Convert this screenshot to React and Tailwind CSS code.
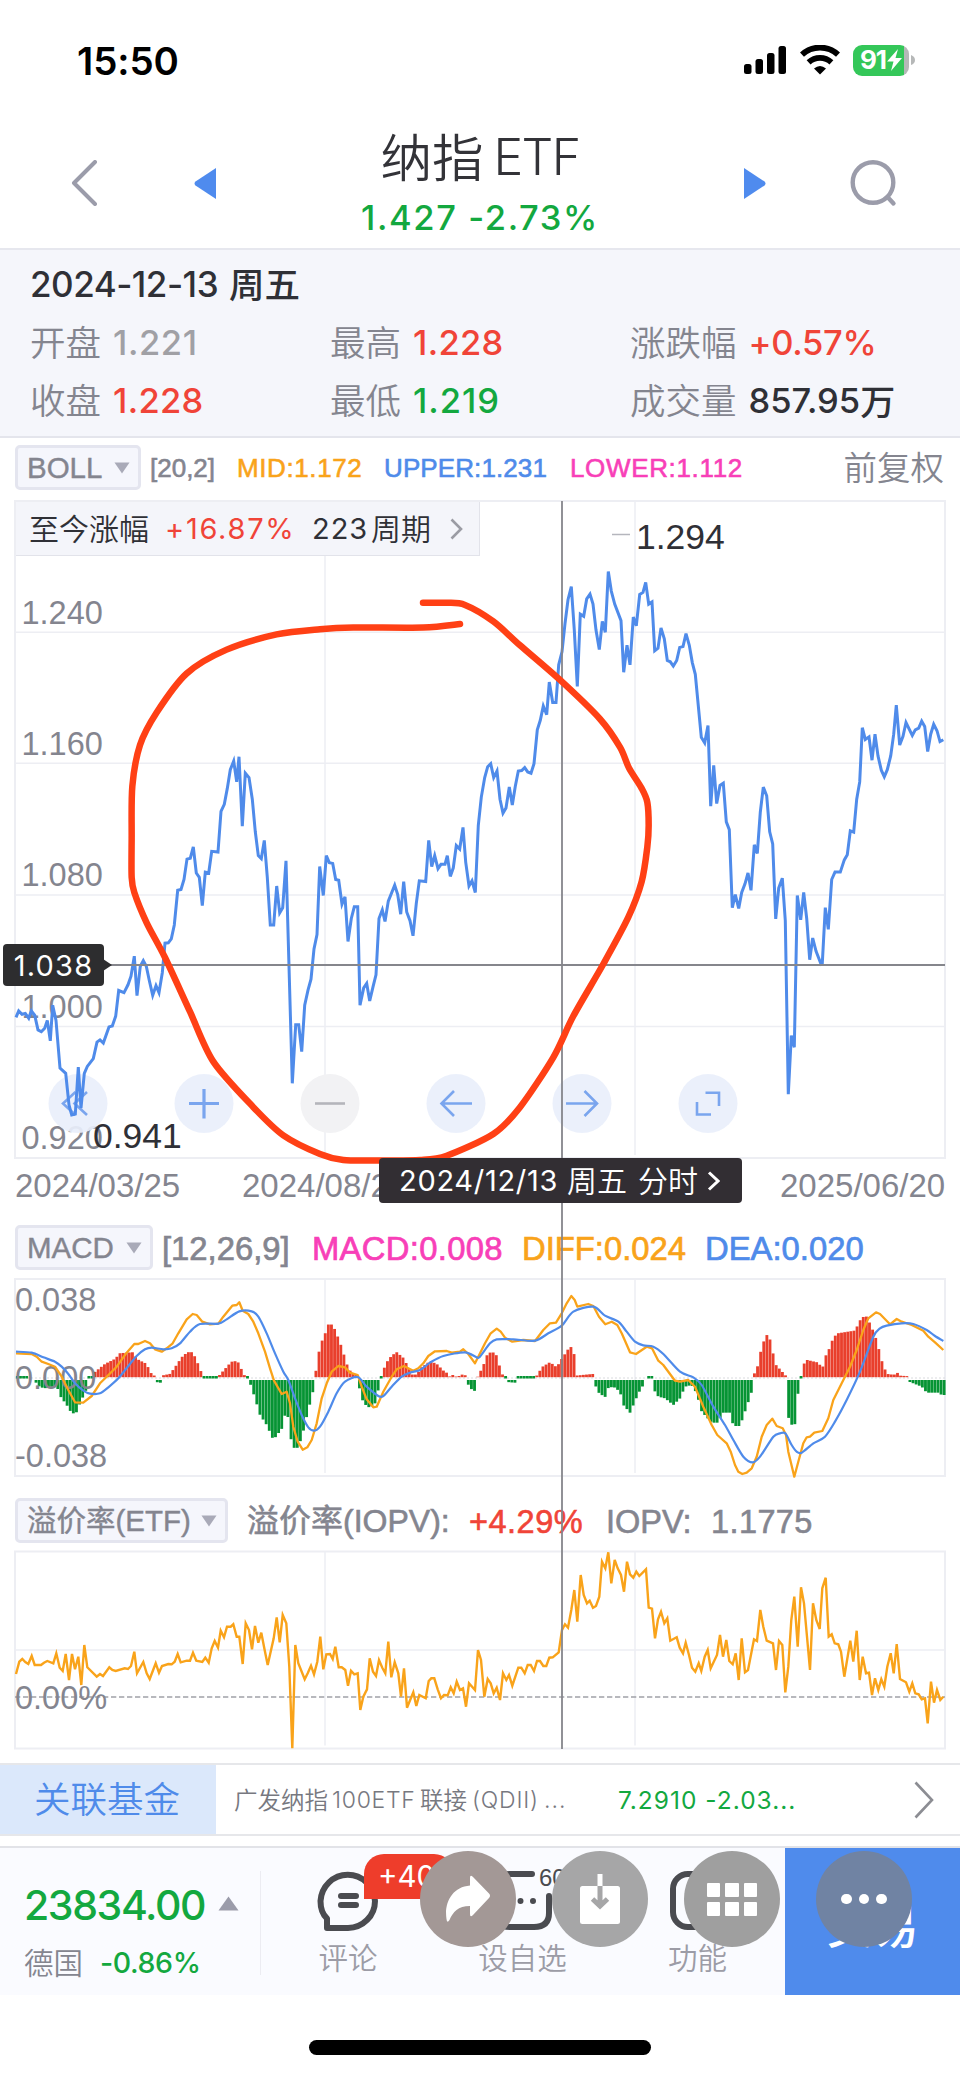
import React from "react";

const SANS = "font-['Liberation_Sans','Noto_Sans_CJK_SC',sans-serif]";

/* Series are stored in third-of-a-pixel units along x, split where long. */
const PRICE_A =
  "48,1193 56,1178 66,1186 76,1184 86,1195 94,1178 104,1188 114,1222 124,1226 134,1218 142,1200 151,1247 158,1165 168,1200 180,1310 197,1322 207,1395 215,1418 226,1416 235,1308 243,1402 253,1322 262,1306 280,1288 291,1250 300,1245 310,1252 327,1215 337,1213 347,1190 356,1131 372,1136 384,1118 393,1098 403,1052 411,1143 421,1075 430,1062 439,1075 448,1108 458,1142 468,1120 477,1136 487,1090 495,1022 505,1021 514,1012 523,980 533,900 543,898 552,875 561,828 571,826 580,800 589,860 598,870 607,935 616,858 626,860 635,810 654,812 663,718 673,702 682,665 691,622 701,602 710,650 717,592 727,752 736,630 747,640 757,690 766,765 775,820 784,827 793,785 802,870 811,980 821,980 830,890 839,952 848,940 858,832 867,1075 877,1345 887,1210 896,1210 905,1272 914,1165 924,1130 933,1105 942,1035 951,1002 959,845";
const PRICE_B =
  "10,912 19,820 28,836 38,838 47,875 56,877 66,932 75,915 84,1018 94,965 103,938 113,938 120,1165 131,1125 140,1115 149,1155 160,1120 168,1095 177,965 187,945 195,972 205,925 224,888 233,910 242,955 251,880 260,950 270,970 279,1005 289,930 298,878 317,880 326,785 335,845 344,820 354,850 363,840 375,840 382,820 391,868 400,848 409,797 419,805 429,755 437,835 447,890 456,878 466,905 475,750 484,685 494,640 503,615 512,608 521,640 531,625 540,690 549,722 558,710 568,662 577,703 586,660 595,625 605,624 614,617 623,627 633,630 642,608 652,530 661,508 670,475 680,495 688,420 698,467 708,467 716,380 726,350 735,285 744,230 754,200 763,300 772,430 781,263 791,268 800,228 810,217 819,240 828,300 838,345 847,280 856,305 865,165 874,210 884,240 903,278 911,397 921,335 930,380 940,270 949,290 959,218";
const PRICE_C =
  "9,213 17,190 26,240 36,235 44,348 54,342 63,295 73,320 82,370 91,373 100,383 110,370 119,340 129,338 138,308 148,335 157,375 166,402 184,547 194,560 204,520 212,706 221,612 230,700 240,658 250,653 259,742 268,760 277,940 286,910 296,942 305,905 315,885 324,860 333,900 343,795 352,815 361,720 370,662 380,682 389,765 398,793 407,966 416,895 427,872 436,970 445,1370 454,1235 463,1262 472,912 482,968 491,905 500,965 509,1060 518,1010 528,1040 543,1070 547,1068 556,940 565,990 575,875 585,858 601,858 613,830 622,818 631,763 641,766 650,690 659,650 667,525 676,552 687,546 696,600 705,540 714,590 724,623 733,638 742,622 752,590 761,540 769,473 779,565 789,545 798,513 817,543 826,530 836,526 845,510 854,522 863,580 872,540 881,517 891,532 900,557 910,553";

const DIFF_A =
  "48,610 95,612 110,620 125,635 145,642 165,650 185,680 205,720 225,757 250,758 275,738 300,700 320,680 350,650 380,608 403,582 415,582 435,573 450,580 465,598 485,605 500,595 518,580 535,550 560,508 578,492 590,495 607,515 630,523 655,521 670,500 697,467 710,465 718,457 728,482 745,492 760,515 775,550 795,605 810,655 822,692 845,732 860,725 870,760 880,830 893,875 908,899 922,892 935,870 950,820 965,745 980,700 995,665 1015,648 1035,652 1050,668 1073,675 1085,710 1100,748 1120,772 1130,770 1150,725 1175,680 1190,658 1212,648 1225,655 1240,662 1255,655 1270,640 1285,618 1305,604 1340,603 1355,608 1380,605 1390,598 1405,612 1425,640 1438,614";
const DIFF_B =
  "15,580 32,550 50,536 62,545 75,563 97,575 130,570 165,573 190,540 210,520 228,518 245,490 260,460 274,438 284,450 292,470 325,462 340,468 357,500 376,523 395,515 412,525 425,550 450,607 468,612 500,590 516,595 535,632 550,645 585,692 600,695 625,690 645,710 670,770 695,825 712,855 740,880 752,905 765,945 775,965 787,972 800,968 815,955 830,920 845,860 860,825 877,806 890,828 908,835 918,855 925,905 943,980 955,935 970,880 980,862 990,860 1003,848 1027,843 1045,805 1060,750 1085,700 1110,650 1130,600 1150,540 1165,505 1188,487 1200,492 1230,523 1250,507 1265,515 1295,525 1330,542 1345,560 1365,577 1390,600";
const DEA_A =
  "48,605 95,608 130,622 165,635 185,650 205,672 225,700 250,722 270,731 300,730 325,712 355,685 385,648 410,618 435,598 455,593 490,598 515,595 540,580 570,545 600,522 655,521 680,508 718,484 755,484 775,500 800,550 825,610 850,665 865,690 885,745 905,795 925,832 943,842 960,830 985,785 1010,730 1035,695 1073,681 1100,710 1135,738 1150,738 1175,710 1205,680 1230,668 1260,660 1290,638 1330,618 1395,607 1430,622";
const DEA_B =
  "0,620 30,580 50,568 100,568 165,572 205,550 245,527 280,485 340,470 375,497 415,515 440,545 465,575 490,586 520,590 550,612 600,665 640,682 665,705 700,770 735,825 760,870 790,920 818,937 840,920 880,860 900,850 916,850 935,885 950,905 965,908 1000,880 1035,860 1065,815 1100,750 1140,665 1180,560 1200,535 1220,527 1265,520 1300,522 1340,540 1365,558 1390,573";

/* Histogram envelope: x, signed height. */
const HIST_A =
  "48,-3 80,-3 82,0 100,0 108,-8 120,-22 140,-25 150,-20 172,-22 178,-45 200,-75 215,-100 228,-100 240,-70 262,-22 266,-4 276,-4 278,10 290,20 315,40 345,55 360,72 400,75 410,55 440,40 450,15 465,3 466,-3 474,-8 490,-8 491,6 510,10 525,30 545,60 562,75 578,75 590,50 605,12 611,5 612,-4 655,-4 657,5 675,25 690,42 700,50 720,42 727,10 735,5 736,-4 748,-4 752,-15 765,-55 780,-105 800,-135 820,-180 835,-160 850,-140 856,-95 868,-120 875,-200 890,-207 905,-175 920,-110 940,-30 945,-5 947,15 960,95 975,130 985,158 998,158 1010,130 1025,90 1040,40 1050,20 1060,10 1075,8 1077,-20 1090,-70 1110,-84 1125,-70 1137,-20 1143,-5 1145,10 1160,45 1175,65 1190,75 1210,58 1225,30 1235,8 1250,8 1265,30 1290,48 1310,40 1330,20 1345,10 1350,0 1360,8 1370,0 1385,8 1400,5 1402,-8 1410,-25 1428,-35 1432,0 1439,12";
const HIST_B =
  "0,15 10,35 20,65 35,78 50,65 65,10 75,3 76,-5 90,-7 105,-8 112,-4 165,-4 172,5 185,30 210,45 230,30 245,55 265,85 275,92 285,60 290,5 310,7 342,10 344,-8 352,-35 375,-52 382,-25 400,-20 420,-35 430,-75 450,-98 460,-75 475,-40 490,-15 495,0 500,0 502,-4 518,-4 522,-30 535,-50 555,-55 580,-75 600,-55 615,-20 635,-15 650,-40 665,-95 695,-128 712,-128 730,-98 750,-98 760,-138 780,-138 800,-80 815,-35 818,5 830,20 840,70 858,130 872,110 885,40 905,18 917,5 919,-95 930,-125 943,-148 952,-55 958,-10 962,-5 965,30 980,52 1010,45 1028,30 1035,60 1050,90 1060,120 1075,132 1125,140 1145,180 1160,182 1175,150 1190,110 1205,50 1220,10 1235,8 1245,8 1250,20 1255,5 1285,3 1287,-5 1300,-10 1325,-20 1340,-38 1375,-38 1385,-45 1395,-45";

const PREM_A =
  "48,582 58,545 67,537 76,546 85,552 95,528 104,555 123,555 132,548 142,543 160,550 169,520 179,563 188,573 197,522 207,600 216,522 225,568 235,530 244,615 253,495 262,562 290,590 300,582 309,588 328,562 337,570 347,573 374,565 384,567 393,558 403,515 411,580 430,546 440,580 449,597 467,550 477,578 486,558 505,552 515,553 524,545 533,522 542,547 560,542 570,542 579,518 589,542 607,546 616,533 626,548 635,505 644,483 654,503 662,452 672,472 681,440 692,440 700,433 710,470 718,470 728,552 737,430 747,450 756,508 765,438 775,488 784,458 793,505 803,555 821,475 830,412 839,487 848,405 859,430 868,560 877,805 886,495 895,550 914,598 923,580 933,557 942,583 952,545 961,470 970,568 979,523 990,522 998,537 1006,500 1016,562 1025,562 1036,570 1044,617 1053,572 1063,583 1073,580 1081,690 1090,650 1101,628 1109,535 1119,575 1128,588 1137,540 1147,563 1156,580 1165,485 1174,592 1184,547 1195,580 1203,650 1212,565 1221,683 1240,637 1249,678 1258,645 1277,655 1286,603 1294,595 1303,595 1313,628 1323,655 1332,645 1343,646 1352,622 1361,640 1370,605 1380,630 1389,625 1398,680 1407,610 1425,630 1434,510";
const PREM_B =
  "3,540 13,650 23,597 32,610 41,640 50,623 60,660 69,580 79,600 87,585 97,617 115,563 124,563 134,580 143,555 152,555 162,573 171,543 180,543 190,558 199,558 208,533 218,532 236,517 246,450 255,433 264,443 274,390 283,330 292,425 302,285 311,345 321,370 329,362 339,383 348,378 358,350 366,245 376,265 385,217 394,310 404,240 413,265 423,285 432,335 441,245 450,283 460,293 469,275 478,288 498,268 506,383 516,386 525,475 534,418 543,395 553,430 562,415 571,482 590,472 599,503 609,520 617,488 627,525 636,563 646,575 656,550 664,573 674,530 683,510 692,565 711,525 720,465 729,530 739,480 748,543 758,553 767,520 776,600 785,475 795,577 804,570 822,478 831,483 841,390 850,440 860,482 879,490 888,570 897,483 907,495 916,637 925,560 934,420 943,350 953,500 963,322 972,370 990,570 999,370 1009,420 1019,447 1027,325 1037,293 1046,470 1055,463 1064,490 1075,493 1083,515 1093,590 1111,482 1120,545 1130,452 1139,600 1148,530 1158,580 1167,578 1176,645 1185,595 1195,630 1204,598 1213,620 1222,560 1232,520 1241,580 1250,492 1260,597 1278,607 1288,635 1297,610 1306,640 1316,643 1325,658 1335,655 1343,730 1353,605 1362,668 1371,630 1381,660 1390,650";

const parse = (s, dx = 0) => s.split(" ").map((p) => p.split(",").map(Number)).map(([x, y]) => [x + dx, y]);
const PRICE_K = 680 / 1568;
const priceXY = ([x, y]) => [x / 3, 500 + y * PRICE_K];
const pts = (list) => list.map(([x, y]) => `${x.toFixed(1)},${y.toFixed(1)}`).join(" ");

const price = [...parse(PRICE_A), ...parse(PRICE_B, 960), ...parse(PRICE_C, 1920)].map(priceXY);
const lower = (a, b, top) => [...parse(a), ...parse(b, 1440)].map(([x, y]) => [x / 3, top + y / 3]);
const diff = lower(DIFF_A, DIFF_B, 1150);
const dea = lower(DEA_A, DEA_B, 1150);
const premium = lower(PREM_A, PREM_B, 1480);

const envelope = [...parse(HIST_A), ...parse(HIST_B, 1440)];
const bars = Array.from({ length: 299 }, (_, i) => {
  const x = 52 + i * 9.33;
  let k = envelope.findIndex((p) => p[0] > x);
  if (k < 1) k = envelope.length - 1;
  const [x0, y0] = envelope[k - 1];
  const [x1, y1] = envelope[k];
  const t = Math.min(1, (x - x0) / (x1 - x0));
  const v = y0 * y1 < 0 ? (t < 0.5 ? y0 : y1) : y0 + (y1 - y0) * t;
  return [x / 3, v / 3];
});

const LOOP = [
  ...parse("420,286 310,294 100,294 0,298", 960),
  ...parse("830,310 680,345 560,400 470,490 420,565 397,660 395,780 395,870 403,905 440,975 495,1055 570,1180 640,1295 760,1400 850,1465"),
  ...parse("0,1508 70,1522 180,1523 300,1522 380,1512 520,1462 600,1400 700,1285 760,1190 850,1070 925,962", 960),
  ...parse("5,880 22,800 26,750 22,697 5,665", 1920),
  ...parse("927,618 900,570 840,505 720,415 600,335 520,280 435,242 380,237 309,237", 960),
].map(priceXY);

const smooth = (p) => {
  let d = `M${p[0][0]} ${p[0][1]}`;
  for (let i = 0; i < p.length - 1; i++) {
    const a = p[i - 1] || p[i];
    const b = p[i];
    const c = p[i + 1];
    const e = p[i + 2] || c;
    d += `C${b[0] + (c[0] - a[0]) / 7} ${b[1] + (c[1] - a[1]) / 7} ${c[0] - (e[0] - b[0]) / 7} ${c[1] - (e[1] - b[1]) / 7} ${c[0]} ${c[1]}`;
  }
  return d;
};

function StatusBar() {
  return (
    <div className="flex h-[120px] shrink-0 items-center justify-between pl-[77px] pr-[45px]">
      <span className="mt-[2px] font-['Inter',sans-serif] text-[38.5px] font-semibold leading-none tracking-[-0.1px] text-black">15:50</span>
      <div className="flex items-center">
        <svg width="42" height="30" viewBox="0 0 42 30">
          <rect x="0" y="19" width="7.5" height="10" rx="2.5" />
          <rect x="11.5" y="14" width="7.5" height="15" rx="2.5" />
          <rect x="23" y="8" width="7.5" height="21" rx="2.5" />
          <rect x="34.5" y="1" width="7.5" height="28" rx="2.5" />
        </svg>
        <svg className="ml-[14px]" width="40" height="30" viewBox="0 0 40 30" fill="none" stroke="#000" strokeWidth="5.8">
          <path d="M2 9.6A26.5 26.5 0 0 1 38 9.6" />
          <path d="M8.6 17.3A17 17 0 0 1 31.4 17.3" />
          <path d="M14 23.4Q20 18.4 26 23.4L20 29.4Z" fill="#000" stroke="none" />
        </svg>
        <div className="ml-[13px] flex h-[31px] w-[56px] items-center overflow-hidden rounded-[9px] bg-[linear-gradient(90deg,#34c759_91%,#b6b8b8_91%)]">
          <span className="ml-[7px] font-['Inter',sans-serif] text-[26px] font-bold leading-none tracking-[-1.2px] text-white">91</span>
          <svg className="ml-px" width="15" height="22" viewBox="0 0 15 22">
            <path d="M11 0L0 12.5H6.5L4 22L15 9H8.5Z" fill="#fff" />
          </svg>
        </div>
        <svg className="ml-[2px]" width="4" height="10" viewBox="0 0 4 10">
          <path d="M0 0Q4 1.5 4 5T0 10Z" fill="#b6b8b8" />
        </svg>
      </div>
    </div>
  );
}

function Header() {
  return (
    <header className="flex h-[130px] shrink-0 justify-between border-b-2 border-[#e6e7ee] pl-[71px] pr-[62px]">
      <div className="flex pt-[40px]">
        <svg width="27" height="46" viewBox="0 0 27 46" fill="none" stroke="#9b9caa" strokeWidth="4" strokeLinecap="round" strokeLinejoin="round">
          <path d="M24 2L3 23L24 44" />
        </svg>
        <svg className="ml-[95px] mt-[7px]" width="24" height="33" viewBox="0 0 24 33">
          <path d="M23 1V32L2.5 18.5Q.5 16.500 2.500 14.500Z" fill="#4f8bee" />
        </svg>
      </div>
      <div className="flex flex-col items-center">
        <div className="mt-[12px] flex h-[50px] items-center gap-[10px] leading-none text-[#333338]">
          <span className="-mt-[4px] font-['Noto_Sans_CJK_SC',sans-serif] text-[51.5px] font-[350]">纳指</span>
          <span className="font-['Inter',sans-serif] text-[50px] font-[350] tracking-[-1.6px]">ETF</span>
        </div>
        <span className="mt-[18px] font-['Inter',sans-serif] text-[34.5px] font-medium leading-[36px] tracking-[1.6px] text-[#13a83f]">1.427 -2.73%</span>
      </div>
      <div className="flex pt-[40px]">
        <svg className="mt-[7px]" width="24" height="33" viewBox="0 0 24 33">
          <path d="M1 1V32L21.500 18.500Q23.500 16.500 21.500 14.500Z" fill="#4f8bee" />
        </svg>
        <svg className="ml-[82px]" width="49" height="48" viewBox="0 0 49 48" fill="none" stroke="#9b9caa" strokeWidth="4.400" strokeLinecap="round">
          <circle cx="24" cy="22.500" r="20.300" />
          <path d="M38.500 37L44.500 43.500" />
        </svg>
      </div>
    </header>
  );
}

function Stat({ label, value, unit, cls }) {
  return (
    <div className="flex items-center gap-[12px] leading-none">
      <span className="-mt-[4px] font-['Noto_Sans_CJK_SC',sans-serif] text-[35.5px] font-[350] text-[#84858f]">{label}</span>
      <span className={`flex items-center font-['Inter',sans-serif] text-[34.5px] font-medium ${cls}`}>
        {value}
        {unit && <span className="-mt-[3px] font-['Noto_Sans_CJK_SC',sans-serif] text-[35px]">{unit}</span>}
      </span>
    </div>
  );
}

function Quote() {
  return (
    <section className="flex h-[188px] shrink-0 flex-col border-b-2 border-[#e4e5ec] bg-[#f5f6fb] pl-[30px]">
      <div className="mt-[14px] flex h-[40px] items-center gap-[11px] leading-none text-[#2f3036]">
        <span className="font-['Inter',sans-serif] text-[35px] font-medium tracking-[-0.5px]">2024-12-13</span>
        <span className="-mt-[3px] font-['Noto_Sans_CJK_SC',sans-serif] text-[35.5px] font-medium">周五</span>
      </div>
      <div className="mt-[10px] grid grid-cols-[300px_300px_1fr] auto-rows-[58px] items-center">
        <Stat label="开盘" value="1.221" cls="tracking-[0.6px] text-[#a0a0a5]" />
        <Stat label="最高" value="1.228" cls="tracking-[0.3px] text-[#f04438]" />
        <Stat label="涨跌幅" value="+0.57%" cls="tracking-[-0.3px] text-[#f04438]" />
        <Stat label="收盘" value="1.228" cls="tracking-[0.3px] text-[#f04438]" />
        <Stat label="最低" value="1.219" cls="tracking-[1px] text-[#13a83f]" />
        <Stat label="成交量" value="857.95" unit="万" cls="text-[#2f3036]" />
      </div>
    </section>
  );
}

function Picker({ children, width }) {
  return (
    <div className={`flex h-[45px] shrink-0 items-center justify-between rounded-[5px] border-[3px] border-[#e4e5ef] bg-[#f5f6fc] pl-[9px] pr-[8px] text-[29.5px] leading-none text-[#84858f] [-webkit-text-stroke:0.4px] ${width}`}>
      <span className="whitespace-nowrap">{children}</span>
      <svg width="16" height="12" viewBox="0 0 16 12">
        <path d="M.5 .5H15.500L8 11.500Z" fill="#a9aab8" />
      </svg>
    </div>
  );
}

function GridFrame({ top, bottom, rows = [] }) {
  return (
    <g stroke="#edeef3" strokeWidth="1.500" fill="none">
      {rows.map((y) => (
        <path key={y} d={`M15 ${y}H945`} />
      ))}
      <path d={`M325 ${top}V${bottom - 3}M635 ${top}V${bottom - 3}`} />
      <rect x="15" y={top} width="930" height={bottom - top} strokeWidth="2" />
    </g>
  );
}

function PriceChart() {
  const labels = [["1.240", 623.5], ["1.160", 754.5], ["1.080", 886], ["1.000", 1018], ["0.920", 1148.5]];
  return (
    <svg className="block shrink-0" width="960" height="660" viewBox="0 500 960 660">
      <GridFrame top={501} bottom={1158} rows={[632.3, 763.3, 895, 1026.500]} />
      <g className={SANS} fontSize="32.500" fill="#84858f">
        {labels.map(([t, y]) => (
          <text key={t} x="21.500" y={y}>{t}</text>
        ))}
      </g>
      <circle cx="330" cy="1103.500" r="29.500" fill="#f2f2f4" />
      {[78, 204, 456, 582, 708].map((x) => (
        <circle key={x} cx={x} cy="1103.500" r="29.500" fill="#e9effb" fillOpacity=".92" />
      ))}
      <g fill="none" stroke="#7aa5ee" strokeWidth="2.600">
        <path d="M75.500 1092L63 1103.500L75.500 1115M87 1092L74.500 1103.500L87 1115" />
        <path d="M189 1103.500H219M204 1089V1118.500" strokeWidth="3.200" />
        <path d="M472 1103.500H441.500M454 1091L441.500 1103.500L454 1116" />
        <path d="M566 1103.500H597M584.500 1091L597 1103.500L584.500 1116" />
        <path d="M705.500 1092.800H719V1106M697 1102V1114.500H711" />
        <path d="M315 1103.500H345" stroke="#b4b5bb" />
      </g>
      <polyline points={pts(price)} fill="none" stroke="#4f8bea" strokeWidth="3" strokeLinejoin="miter" />
      <path d="M612 534.500H630" stroke="#b5b6bd" strokeWidth="1.500" />
      <g className={SANS} fontSize="35.500" fill="#2f3036">
        <text x="636" y="549">1.294</text>
        <text x="93" y="1147.500">0.941</text>
      </g>
    </svg>
  );
}

function DateAxis() {
  return (
    <div className="flex h-[65px] shrink-0 items-start pl-[15px] pt-[7px] text-[33px] leading-[38px] text-[#84858f]">
      <span className="w-[227px]">2024/03/25</span>
      <span className="w-[538px]">2024/08/22</span>
      <span>2025/06/20</span>
    </div>
  );
}

function MacdChart() {
  return (
    <svg className="block shrink-0" width="960" height="200" viewBox="0 1278 960 200">
      <GridFrame top={1279} bottom={1476} />
      <path d="M15 1378H945" stroke="#d9dade" strokeDasharray="2 2" />
      {bars.map(([x, v], i) =>
        Math.abs(v) < 0.4 ? null : (
          <rect key={i} x={x - 1.4} y={v > 0 ? 1377.2 - v : v > -1.8 ? 1376 : 1380} width="2.850" height={v > 0 ? v : v > -1.8 ? 2.5 : -v} fill={v > 0 ? "#e93f2c" : "#069434"} />
        )
      )}
      <g className={SANS} fontSize="32.500" fill="#84858f">
        <text x="15" y="1311">0.038</text>
        <text x="15" y="1389">0.000</text>
        <text x="15" y="1467">-0.038</text>
      </g>
      <polyline points={pts(diff)} fill="none" stroke="#f9a31a" strokeWidth="2.300" strokeLinejoin="round" />
      <path d={smooth(dea)} fill="none" stroke="#4f8bea" strokeWidth="2.200" />
    </svg>
  );
}

function PremiumChart() {
  return (
    <svg className="block shrink-0" width="960" height="213" viewBox="0 1550 960 213">
      <GridFrame top={1551.5} bottom={1748.5} rows={[1650]} />
      <path d="M15 1697H945" stroke="#a0a1a8" strokeWidth="1.400" strokeDasharray="5.300 2.700" />
      <text className={SANS} x="15" y="1709" fontSize="32.500" fill="#84858f">0.00%</text>
      <polyline points={pts(premium)} fill="none" stroke="#f9a31a" strokeWidth="2.400" />
    </svg>
  );
}

function Crosshair() {
  return (
    <>
      <svg className="absolute left-0 top-[500px]" width="960" height="1250" viewBox="0 500 960 1250">
        <path d="M562 501V1749M104 965H945" stroke="#85868c" strokeWidth="1.800" fill="none" />
        <path d={smooth(LOOP)} fill="none" stroke="#ff4015" strokeWidth="6.500" strokeLinecap="round" strokeLinejoin="round" />
        <path d="M103 959L112 965L103 971Z" fill="#2d2d2f" />
      </svg>
      <div className="absolute left-[3px] top-[944px] flex h-[42px] w-[101px] items-center justify-center rounded-[4px] bg-[#2d2d2f] font-['Inter',sans-serif] text-[29px] leading-none tracking-[1.2px] text-white">1.038</div>
      <div className="absolute left-[379px] top-[1158px] flex h-[45px] w-[363px] items-center rounded-[4px] bg-[#322e33] pl-[20px] font-['Inter',sans-serif] text-[29px] leading-none text-white">
        <span className="w-[168px] tracking-[0.7px]">2024/12/13</span>
        <span className="-mt-[3px] w-[71px] font-['Noto_Sans_CJK_SC',sans-serif] text-[30px] font-[350]">周五</span>
        <span className="-mt-[3px] w-[69px] font-['Noto_Sans_CJK_SC',sans-serif] text-[30px] font-[350]">分时</span>
        <svg width="13" height="20" viewBox="0 0 13 20" fill="none" stroke="#fff" strokeWidth="3">
          <path d="M2 1.500L11 10L2 18.500" />
        </svg>
      </div>
    </>
  );
}

function RelatedFund() {
  return (
    <div className="flex h-[73px] shrink-0 items-center border-y-2 border-[#e6e7ea] leading-none">
      <div className="flex h-full w-[216px] items-center justify-center bg-[#dbe8fb] pb-[2px] pr-[2px] font-['Noto_Sans_CJK_SC',sans-serif] text-[36.5px] font-[350] text-[#4f8bea]">关联基金</div>
      <div className="ml-[18px] mt-[2px] flex w-[384px] items-center font-['Inter',sans-serif] text-[23px] font-light text-[#77787f]">
        <span className="-mt-[2px] w-[98px] font-['Noto_Sans_CJK_SC',sans-serif] text-[23.500px] font-[350]">广发纳指</span>
        <span className="w-[88px] tracking-[0.7px]">100ETF</span>
        <span className="-mt-[2px] w-[52px] font-['Noto_Sans_CJK_SC',sans-serif] text-[23.500px] font-[350]">联接</span>
        <span className="w-[72px] tracking-[0.8px]">(QDII)</span>
        <span className="tracking-[1px]">...</span>
      </div>
      <span className="mt-[2px] w-[296px] font-['Inter',sans-serif] text-[24.500px] tracking-[1px] text-[#13a83f]">7.2910 -2.03...</span>
      <svg width="20" height="38" viewBox="0 0 20 38" fill="none" stroke="#8c8d93" strokeWidth="2.600">
        <path d="M1.500 1.500L18 19L1.500 36.500" />
      </svg>
    </div>
  );
}

function Disc({ x, cls, children }) {
  return (
    <div className={`absolute top-[1851px] flex size-[96px] items-center justify-center rounded-full ${x} ${cls}`}>{children}</div>
  );
}

function BottomBar() {
  return (
    <footer className="flex h-[149px] shrink-0 border-t-2 border-[#e2e3e8] bg-[#fafbff] leading-none">
      <div className="flex w-[260px] flex-col pl-[24px]">
        <div className="mt-[37px] flex h-[40px] items-center">
          <span className="w-[194px] font-['Inter',sans-serif] text-[41px] font-medium tracking-[-1.400px] text-[#13a83f]">23834.00</span>
          <svg className="-mt-[4px]" width="21" height="15" viewBox="0 0 21 15">
            <path d="M10.500 .5L20.500 14.500H.5Z" fill="#9b9caa" />
          </svg>
        </div>
        <div className="mt-[22px] flex h-[32px] items-center">
          <span className="-mt-[2px] w-[76px] font-['Noto_Sans_CJK_SC',sans-serif] text-[29.500px] font-[350] text-[#84858f]">德国</span>
          <span className="font-['Inter',sans-serif] text-[28.500px] font-medium tracking-[-0.400px] text-[#13a83f]">-0.86%</span>
        </div>
      </div>
      <div className="mt-[23px] h-[104px] w-px bg-[#ececf2]" />
      <div className="grid w-[524px] grid-cols-[174px_175px_175px] font-['Noto_Sans_CJK_SC',sans-serif] text-[29.500px] font-[350] text-[#9c9ca6]">
        <div className="flex flex-col items-center">
          <svg className="mt-[21px]" width="62" height="64" viewBox="0 0 62 64" fill="none" stroke="#4a4b50" strokeWidth="6" strokeLinecap="round" strokeLinejoin="round">
            <path d="M10 59V49.500C5 45 3.500 38 3.500 32A27.300 28 0 0 1 58 32A27.300 27 0 0 1 31 59Z" />
            <path d="M24 27H39M24 36H39" />
          </svg>
          <span className="mt-[9px]">评论</span>
        </div>
        <div className="flex flex-col items-center">
          <svg className="mt-[21px]" width="62" height="64" viewBox="0 0 62 64" fill="none" stroke="#4a4b50" strokeWidth="6" strokeLinecap="round">
            <path d="M40 5H18Q4 5 4 20V44Q4 58 18 58H42Q57 58 57 44V27" />
            <path d="M15 32V32.010M28.500 32V32.010M41 32V32.010" />
          </svg>
          <span className="mt-[9px]">设自选</span>
        </div>
        <div className="flex flex-col items-center">
          <svg className="mt-[21px]" width="62" height="64" viewBox="0 0 62 64" fill="none" stroke="#4a4b50" strokeWidth="6">
            <rect x="6" y="5" width="52" height="53" rx="15" />
          </svg>
          <span className="mt-[9px]">功能</span>
        </div>
      </div>
      <div className="flex flex-1 items-center justify-center bg-[#4f8bec] pt-[2px] font-['Noto_Sans_CJK_SC',sans-serif] text-[46px] font-medium text-white">交易</div>
    </footer>
  );
}

function Overlays() {
  return (
    <>
      <div className="absolute left-[364px] top-[1854px] flex h-[45px] w-[90px] items-center rounded-t-[20px] bg-[#ee3d2b] pl-[14px] font-['Inter',sans-serif] text-[29.500px] leading-none text-white">+400</div>
      <span className="absolute left-[539px] top-[1866px] text-[24px] leading-[24px] text-[#4a4b50]">600</span>
      <Disc x="left-[420px]" cls="bg-[#a39896]">
        <svg width="48" height="48" viewBox="0 0 48 48">
          <path d="M26 3Q26 -1 29 2L45 18.500Q47 20.500 45 23L29 40Q26 43 26 39V31C14 31 9 37 5.500 45Q3 49 2.500 44C0 28 8 12 26 10.500Z" fill="#fff" />
        </svg>
      </Disc>
      <Disc x="left-[552px]" cls="bg-[#a6a6a7]">
        <svg width="40" height="50" viewBox="0 0 40 50">
          <rect x="0" y="12" width="40" height="38" rx="2.500" fill="#fff" />
          <path d="M20 0V12" stroke="#fff" strokeWidth="5" />
          <path d="M20 12V31M12.500 25L20 32L27.500 25" fill="none" stroke="#a6a6a7" strokeWidth="5" />
        </svg>
      </Disc>
      <Disc x="left-[684px]" cls="bg-[#9f9f9f]">
        <div className="grid grid-cols-3 gap-[5px]">
          {[0, 1, 2, 3, 4, 5].map((i) => (
            <div key={i} className="h-[14px] w-[13.500px] rounded-[1px] bg-white" />
          ))}
        </div>
      </Disc>
      <Disc x="left-[816px]" cls="bg-[#7083a3]">
        <div className="flex gap-[7px]">
          {[0, 1, 2].map((i) => (
            <div key={i} className="size-[10.500px] rounded-full bg-white" />
          ))}
        </div>
      </Disc>
    </>
  );
}

export default function App() {
  return (
    <main className={`relative flex h-[2079px] w-[960px] flex-col overflow-hidden bg-white ${SANS}`}>
      <StatusBar />
      <Header />
      <Quote />
      <div className="flex h-[62px] shrink-0 items-start pl-[15px] pr-[16px] pt-[7px] text-[26px] leading-[47px] [-webkit-text-stroke:0.6px]">
        <Picker width="w-[126px]">BOLL</Picker>
        <span className="ml-[9px] w-[87px] text-[#84858f]">[20,2]</span>
        <span className="w-[147px] tracking-[0.600px] text-[#f9a31a]">MID:1.172</span>
        <span className="w-[186px] tracking-[0.100px] text-[#4f8bea]">UPPER:1.231</span>
        <span className="tracking-[0.650px] text-[#f83fb8]">LOWER:1.112</span>
        <span className="ml-auto font-['Noto_Sans_CJK_SC',sans-serif] text-[33.500px] font-[350] leading-[42px] text-[#84858f] [-webkit-text-stroke:0]">前复权</span>
      </div>
      <PriceChart />
      <DateAxis />
      <div className="flex h-[53px] shrink-0 items-start pl-[15px] text-[32.800px] leading-[47px] [-webkit-text-stroke:0.700px]">
        <Picker width="w-[138px]">MACD</Picker>
        <span className="ml-[9px] w-[150px] text-[#84858f]">[12,26,9]</span>
        <span className="w-[210px] tracking-[0.300px] text-[#f83fb8]">MACD:0.008</span>
        <span className="w-[183px] text-[#f9a31a]">DIFF:0.024</span>
        <span className="text-[#4f8bea]">DEA:0.020</span>
      </div>
      <MacdChart />
      <div className="flex h-[72px] shrink-0 items-start pl-[15px] pt-[20px] text-[32.500px] leading-[48px] [-webkit-text-stroke:0.600px]">
        <Picker width="w-[213px]">溢价率(ETF)</Picker>
        <span className="ml-[19px] w-[222px] whitespace-nowrap text-[32px] leading-[47px] text-[#84858f]">溢价率(IOPV):</span>
        <span className="w-[137px] tracking-[0.500px] text-[#f04438]">+4.29%</span>
        <span className="w-[105px] text-[#84858f]">IOPV:</span>
        <span className="tracking-[0.400px] text-[#84858f]">1.1775</span>
      </div>
      <PremiumChart />
      <RelatedFund />
      <div className="h-[10px] shrink-0" />
      <BottomBar />

      <div className="absolute left-[16px] top-[502px] flex h-[54px] w-[464px] items-center border-b border-r border-[#e2e3ea] bg-[#f4f5fa] pl-[13px] font-['Inter',sans-serif] text-[29px] leading-none text-[#2f3036]">
        <span className="-mt-[3px] w-[136px] font-['Noto_Sans_CJK_SC',sans-serif] text-[30px] font-[350]">至今涨幅</span>
        <span className="w-[147px] tracking-[1.700px] text-[#f04438]">+16.87%</span>
        <span className="w-[59px] tracking-[1px]">223</span>
        <span className="-mt-[3px] w-[79px] font-['Noto_Sans_CJK_SC',sans-serif] text-[30px] font-[350]">周期</span>
        <svg width="13" height="22" viewBox="0 0 13 22" fill="none" stroke="#9b9ca4" strokeWidth="2.600">
          <path d="M1.500 1.500L11 11L1.500 20.500" />
        </svg>
      </div>
      <Crosshair />
      <Overlays />
      <div className="absolute left-[309px] top-[2040px] h-[15px] w-[342px] rounded-full bg-black" />
    </main>
  );
}
